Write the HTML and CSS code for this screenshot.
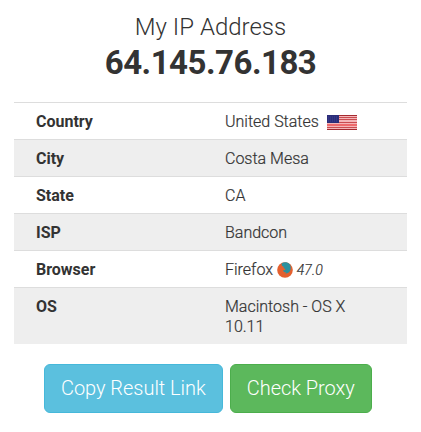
FILE: index.html
```html
<!DOCTYPE html>
<html lang="en">
<head>
  <meta charset="UTF-8" />
  <title>My IP Address</title>
  <link rel="stylesheet" href="styles.css">
</head>
<body>
  <div class="ip-info">
    <h1><span class="ip-label">My IP Address</span><strong class="ip">64.145.76.183</strong></h1>
    <table class="details">
      <tr>
        <th>Country</th>
        <td>United States
          <svg class="flag" width="30" height="15" viewBox="0 0 30 15">
            <rect width="30" height="15" fill="#f4b6b8"/>
            <path d="M0 .5h30M0 14.5h30" stroke="#a52a30"/>
            <path d="M0 2.500h30M0 4.500h30M0 7.500h30M0 12.500h30" stroke="#c94b50"/>
            <path d="M0 10h30" stroke="#ee6a6c" stroke-width="2"/>
            <rect width="12" height="8" fill="#2b2d78"/>
            <path d="M1 2h10M1 4h10M1 6h10" stroke="#4547a0" stroke-width=".7" stroke-dasharray="1 1"/>
          </svg>
        </td>
      </tr>
      <tr>
        <th>City</th>
        <td>Costa Mesa</td>
      </tr>
      <tr>
        <th>State</th>
        <td>CA</td>
      </tr>
      <tr>
        <th>ISP</th>
        <td>Bandcon</td>
      </tr>
      <tr>
        <th>Browser</th>
        <td>Firefox
          <svg class="firefox" width="16" height="16" viewBox="0 0 16 16">
            <circle cx="8" cy="8" r="7.8" fill="#e4602f"/>
            <path d="M4.500 1.500C7-.2 10.500 0 12.500 2c1.600 1.800 1.600 5 .5 7-1 1.800-3 2.800-5 2.300l1.500-1.100c-2 .3-3.300-.7-3.500-2l1.600.1.900-1.300-1.700-.7L6.500 4.500 5 4z" fill="#2b919f"/>
          </svg>
          <em class="version">47.0</em>
        </td>
      </tr>
      <tr>
        <th>OS</th>
        <td>Macintosh - OS X 10.11</td>
      </tr>
    </table>
    <div class="buttons">
      <a class="btn btn-info">Copy Result Link</a>
      <a class="btn btn-success">Check Proxy</a>
    </div>
  </div>
</body>
</html>
```

FILE: styles.css
```css
body {
  margin: 0;
  background-color: #fff;
  color: #333;
  font-family: Roboto, sans-serif;
  font-size: 16px;
  font-weight: 300;
  line-height: 20px;
}
.ip-info {
  width: 393px;
  margin-left: 14px;
  padding-top: 12px;
}
h1 {
  margin: 0 0 20px;
  text-align: center;
  font-weight: 300;
}
.ip-label {
  display: block;
  font-size: 24px;
  line-height: 31px;
}
.ip {
  display: block;
  font-size: 33px;
  font-weight: 700;
  letter-spacing: -.5px;
  line-height: 39px;
}
.details {
  width: 100%;
  table-layout: fixed;
  border-collapse: separate;
  border-spacing: 0;
  -webkit-text-stroke: .2px;
}
.details th,
.details td {
  padding: 9px 22px 7px;
  border-top: 1px solid #ddd;
  text-align: left;
  vertical-align: top;
}
.details th {
  width: 145px;
  font-weight: 700;
  -webkit-text-stroke: 0;
}
.details tr:nth-child(even) {
  background-color: #eee;
}
.details td {
  padding-right: 40px;
}
.flag {
  margin-left: 4px;
  vertical-align: -3px;
}
.firefox {
  vertical-align: -3px;
}
.version {
  font-size: 14px;
}
.buttons {
  display: flex;
  gap: 7px;
  margin: 20px 0 0 30px;
}
.btn {
  padding: 10px 16px;
  border: 1px solid;
  border-radius: 6px;
  color: #fff;
  font-size: 20px;
  letter-spacing: -.04px;
  line-height: 27px;
  white-space: nowrap;
}
.btn-info {
  background-color: #5bc0de;
  border-color: #46b8da;
}
.btn-success {
  background-color: #5cb85c;
  border-color: #4cae4c;
}
```
